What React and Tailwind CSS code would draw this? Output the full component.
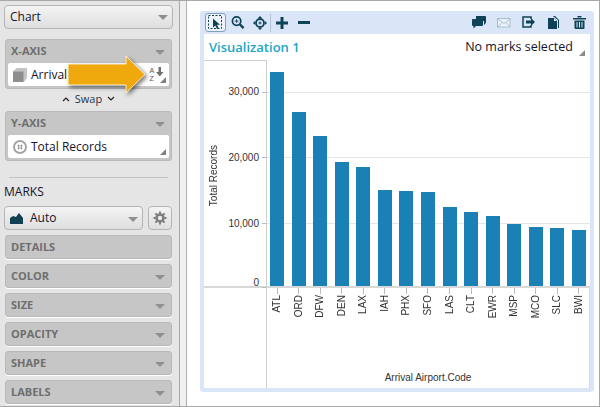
import React from "react";

const F = { fontFamily: '"Open Sans","Noto Sans",sans-serif' };
const bars = [
  ["ATL", 33100], ["ORD", 26900], ["DFW", 23200], ["DEN", 19200], ["LAX", 18400],
  ["IAH", 14900], ["PHX", 14700], ["SFO", 14600], ["LAS", 12200], ["CLT", 11400],
  ["EWR", 10900], ["MSP", 9600], ["MCO", 9100], ["SLC", 9000], ["BWI", 8700],
];

function Caret({ className = "" }) {
  return <span className={"block w-0 h-0 border-l-[5px] border-r-[5px] border-t-[5px] border-l-transparent border-r-transparent border-t-[#8f8f8f] " + className} />;
}
function Corner() {
  return <span className="absolute right-[3px] bottom-[3px] w-0 h-0 border-l-[6px] border-b-[6px] border-l-transparent border-b-[#808080]" />;
}
function Shelf({ label, caret = true }) {
  return (
    <div className="h-[24px] rounded-[3px] bg-[#c6c6c6] border border-[#b9b9b9] flex items-center justify-between pl-[5px] pr-[6px]" style={{ boxShadow: "0 1px 0 #fff" }}>
      <span className="text-[11px] font-bold text-[#6e6e6e]">{label}</span>
      {caret && <Caret className="mt-[2px]" />}
    </div>
  );
}
function Pill({ children }) {
  return (
    <div className="relative h-[23px] mx-[2px] mb-[2px] bg-white rounded-[2px] flex items-center pl-[5px] text-[12px] text-[#14142a]">
      {children}
    </div>
  );
}
function AxisShelf({ label, children }) {
  return (
    <div className="rounded-[3px] bg-[#c6c6c6] border border-[#b9b9b9]">
      <div className="h-[23px] flex items-center justify-between pl-[5px] pr-[6px]">
        <span className="text-[11px] font-bold text-[#6e6e6e]">{label}</span>
        <Caret className="mt-[2px]" />
      </div>
      <Pill>{children}</Pill>
    </div>
  );
}

function Sidebar() {
  return (
    <div className="w-[180px] shrink-0 bg-[#e5e5e5] border-r border-[#a8a8a8] pl-[4px] pr-[6px] pt-[4px] flex flex-col overflow-hidden" style={F}>
      <div className="h-[24px] shrink-0 rounded-[4px] border border-[#b5b5b5] bg-gradient-to-b from-[#f4f4f4] to-[#dedede] flex items-center justify-between pl-[5px] pr-[4px] text-[12px] text-[#14142a]">
        Chart <Caret className="mt-[1px]" />
      </div>
      <div className="mt-[10px] mx-[1px]">
        <AxisShelf label="X-AXIS">
          <svg width="14" height="14" viewBox="0 0 14 14" className="mr-[4px]"><path d="M0 3.500 3.500 0H14v10l-3 4H0z" fill="#c4c4c4" /><path d="M0 3.500h10.500V14H0z" fill="#8e8e8e" /></svg>
          <span className="whitespace-nowrap">Arrival Airport.Code</span>
          <span className="absolute right-0 top-0 h-full w-[24px] flex items-center justify-center">
            <svg width="16" height="15" viewBox="0 0 16 15" className="mb-[1px]">
              <text x="0.500" y="6" fontSize="7" fill="#555" fontFamily="Liberation Sans">A</text>
              <text x="0.500" y="14" fontSize="7" fill="#555" fontFamily="Liberation Sans">Z</text>
              <path d="M9.500 0h2.500v5h2.500L10.800 9.500 7 5h2.500z" fill="#707070" />
            </svg>
          </span>
          <Corner />
        </AxisShelf>
      </div>
      <div className="h-[22px] shrink-0 flex items-center justify-center gap-[5px] text-[11px] text-[#2a3347] pb-[2px]">
        <svg width="8" height="6" viewBox="0 0 8 6"><path d="M1 5l3-3 3 3" fill="none" stroke="#222" strokeWidth="1.200" /></svg>
        Swap
        <svg width="8" height="6" viewBox="0 0 8 6"><path d="M1 1l3 3 3-3" fill="none" stroke="#222" strokeWidth="1.200" /></svg>
      </div>
      <div className="mx-[1px]">
        <AxisShelf label="Y-AXIS">
          <svg width="14" height="14" viewBox="0 0 14 14" className="mr-[4px]"><circle cx="7" cy="7" r="6" fill="#fff" stroke="#a5a5a5" strokeWidth="2" /><path d="M5.500 4.500v5M8.500 4.500v5M4.500 5.800h5M4.500 8.200h5" stroke="#999" strokeWidth="0.900" /></svg>
          Total Records
          <Corner />
        </AxisShelf>
      </div>
      <div className="mt-[16px] mx-[5px] border-t border-[#c4c4c4]" />
      <div className="mt-[4px] text-[12px] leading-[20px] text-[#14142a]">MARKS</div>
      <div className="mt-[4px] flex gap-[5px] mr-[1px]">
        <div className="h-[24px] flex-1 rounded-[4px] border border-[#b5b5b5] bg-gradient-to-b from-[#f4f4f4] to-[#dedede] flex items-center pl-[5px] pr-[4px] text-[12px] text-[#14142a]">
          <svg width="14" height="11" viewBox="0 0 14 11" className="mr-[6px]"><path d="M0 11V5l3-2 3 1 3-4 4 5v6z" fill="#0f3f50" /></svg>
          Auto
          <Caret className="ml-auto mt-[2px]" />
        </div>
        <div className="h-[24px] w-[24px] rounded-[4px] border border-[#b5b5b5] bg-gradient-to-b from-[#f4f4f4] to-[#dedede] flex items-center justify-center">
          <svg width="14" height="14" viewBox="0 0 14 14"><circle cx="7" cy="7" r="3.500" fill="none" stroke="#7d7d7d" strokeWidth="2.500" /><path d="M7 .5v13M.5 7h13M2.400 2.400l9.200 9.200M11.600 2.400l-9.200 9.200" stroke="#7d7d7d" strokeWidth="2" strokeDasharray="2.200 8.600" /></svg>
        </div>
      </div>
      <div className="mt-[5px] mx-[1px] flex flex-col gap-[5px]">
        <Shelf label="DETAILS" caret={false} />
        <Shelf label="COLOR" />
        <Shelf label="SIZE" />
        <Shelf label="OPACITY" />
        <Shelf label="SHAPE" />
        <Shelf label="LABELS" />
      </div>
    </div>
  );
}

function Toolbar() {
  const c = "#0f4256";
  return (
    <div className="h-[23px] shrink-0 flex items-center justify-between pl-[1px] pr-[4px]">
      <div className="flex items-center">
        <span className="w-[21px] h-[19px] rounded-[3px] border border-[#7f9fc0] bg-[#eef3fb] flex items-center justify-center">
          <svg width="15" height="15" viewBox="0 0 15 15"><rect x="0.500" y="0.500" width="13" height="13" fill="none" stroke={c} strokeDasharray="2 1.500" /><path d="M5 3.500v9l2.300-2 1.700 3.500 1.700-.8-1.700-3.400h3z" fill={c} /></svg>
        </span>
        <svg width="14" height="15" viewBox="0 0 15 15" className="ml-[5px]"><circle cx="6" cy="6" r="4.500" fill="none" stroke={c} strokeWidth="1.800" /><path d="M9.500 9.500l4 4" stroke={c} strokeWidth="2.500" /><path d="M4 6h4M6 4v4" stroke={c} /></svg>
        <svg width="14" height="14" viewBox="0 0 14 14" className="ml-[8px]"><path d="M7 0l2 2H5zM7 14l2-2H5zM0 7l2-2v4zM14 7l-2-2v4z" fill={c} /><circle cx="7" cy="7" r="4" fill="none" stroke={c} strokeWidth="1.800" /><path d="M5.500 7h3M7 5.500v3" stroke={c} /></svg>
        <span className="ml-[3px] w-px h-[18px] bg-[#b4c4d6]" />
        <svg width="12" height="12" viewBox="0 0 12 12" className="ml-[5px]"><path d="M4.500 0h3v4.500H12v3H7.500V12h-3V7.500H0v-3h4.500z" fill={c} /></svg>
        <svg width="12" height="3" viewBox="0 0 12 3" className="ml-[10px]"><rect width="12" height="3" fill={c} /></svg>
      </div>
      <div className="flex items-center">
        <svg width="14" height="13" viewBox="0 0 14 13"><path d="M4 0h9q1 0 1 1v5q0 1-1 2l-1 1V5H4z" fill={c} /><path d="M1 3h9q1 0 1 1v5q0 1-1 1H4l-2.500 2.500V10H1q-1 0-1-1V4q0-1 1-1z" fill={c} /></svg>
        <svg width="14" height="10" viewBox="0 0 14 10" className="ml-[11px]"><rect x="0.500" y="0.500" width="12.500" height="8.500" fill="#eef3fb" stroke="#a9bfcb" /><path d="M1 1l6 4.500L13 1M1 9l4-4.500M13 9L9 4.500" fill="none" stroke="#a9bfcb" /></svg>
        <svg width="14" height="13" viewBox="0 0 14 13" className="ml-[11px]"><path d="M9 3V1H1v10h8V9" fill="none" stroke={c} strokeWidth="1.500" /><path d="M4 4.500h5V2l4 4-4 4V7.500H4z" fill={c} /></svg>
        <svg width="12" height="13" viewBox="0 0 12 13" className="ml-[12px]"><path d="M0 2h6l3 3v8H0z" fill={c} /><path d="M5 0h2l4 4v8h-1V4L6 1z" fill={c} /><path d="M6 2v3h3" fill="#dbe6f6" /></svg>
        <svg width="13" height="13" viewBox="0 0 13 13" className="ml-[13px]"><path d="M0 2h13v1.500H0zM4.500 0h4v1.500h-4z" fill={c} /><path d="M1.500 4.500h10V12q0 1-1 1h-8q-1 0-1-1z" fill={c} /><path d="M4 6v5.500M6.500 6v5.500M9 6v5.500" stroke="#dbe6f6" /></svg>
      </div>
    </div>
  );
}

function Chart() {
  const Y = { fontFamily: '"Liberation Sans",Arial,sans-serif' };
  return (
    <div className="relative flex-1 bg-white flex flex-col min-h-0 overflow-hidden" style={Y}>
      <div className="h-[26px] shrink-0 flex items-start justify-between" style={F}>
        <span className="text-[13px] font-semibold text-[#1fa5c4] ml-[5px] mt-[3px] leading-[20px]">Visualization 1</span>
        <span className="text-[12.500px] text-[#14142a] mr-[17px] mt-[3px] leading-[20px]">No marks selected</span>
        <span className="absolute right-[5px] top-[16px] w-0 h-0 border-l-[6px] border-b-[6px] border-l-transparent border-b-[#8a8a8a]" />
      </div>
      <div className="flex h-[228px] shrink-0">
        <div className="w-[63px] shrink-0 border-t border-r border-[#cfcfcf] relative">
          <div className="absolute left-0 right-0 bottom-0 border-b-2 border-[#d8d8d8]" />
          <div className="absolute left-[4px] top-[84px] text-[10px] leading-[12px] text-[#333]" style={{ writingMode: "vertical-rl", transform: "rotate(180deg)" }}>Total Records</div>
          {[["30,000", 31], ["20,000", 97], ["10,000", 163], ["0", 222]].map(([t, top]) => (
            <div key={t} className="absolute right-[7px] text-[10px] leading-[12px] text-[#333]" style={{ top: top - 6 }}>{t}</div>
          ))}
          {[31, 96, 162, 226].map((t) => <div key={t} className="absolute right-0 w-[4px] h-px bg-[#bbb]" style={{ top: t }} />)}
        </div>
        <div className="relative flex-1 flex items-end justify-start pl-[3px] gap-[7.570px] border-b-2 border-[#d8d8d8]">
          {[32, 97, 163].map((t) => <div key={t} className="absolute left-0 right-0 h-px bg-[#e6e6e6]" style={{ top: t }} />)}
          {bars.map(([n, v]) => (
            <div key={n} className="relative w-[14px] bg-[#1a80b6]" style={{ height: (v / 30000) * 194 }} />
          ))}
        </div>
      </div>
      <div className="flex-1 flex min-h-0">
        <div className="w-[63px] shrink-0 border-r border-[#cfcfcf]" />
        <div className="relative flex-1 flex flex-col border-r border-[#d8d8d8]">
          <div className="flex pl-[3px] gap-[7.570px]">
            {bars.map(([n]) => (
              <div key={n} className="relative w-[14px] flex flex-col items-center">
                <span className="w-px h-[6px] bg-[#bbb]" />
                <span className="text-[10px] leading-[12px] text-[#333] mt-px" style={{ writingMode: "vertical-rl", transform: "rotate(180deg)" }}>{n}</span>
              </div>
            ))}
          </div>
          <div className="absolute bottom-[3px] left-0 right-0 text-center text-[10px] leading-[14px] text-[#333]">Arrival Airport.Code</div>
        </div>
      </div>
    </div>
  );
}

function Arrow() {
  return (
    <svg width="84" height="42" viewBox="0 0 84 42" className="absolute left-[67px] top-[54px]" style={{ filter: "drop-shadow(2px 2px 2px rgba(0,0,0,.55))" }}>
      <path d="M1 9h58V1l19 18.500L59 38v-8H1z" fill="#f0a90c" stroke="#fff" strokeWidth="0.800" />
    </svg>
  );
}

export default function App() {
  return (
    <div className="relative w-[600px] h-[407px] bg-white border-t border-b border-r border-[#a8a8a8] flex overflow-hidden">
      <Sidebar />
      <div className="w-[7px] shrink-0 bg-[#f0f0f0] border-r border-[#b0b0b0]" />
      <div className="flex-1 pl-[13px] pr-[5px] pt-[10px] pb-[14px] min-w-0">
        <div className="h-full bg-[#dae6f8] rounded-[3px] flex flex-col px-[4px] pb-[4px]">
          <Toolbar />
          <Chart />
        </div>
      </div>
      <Arrow />
    </div>
  );
}
